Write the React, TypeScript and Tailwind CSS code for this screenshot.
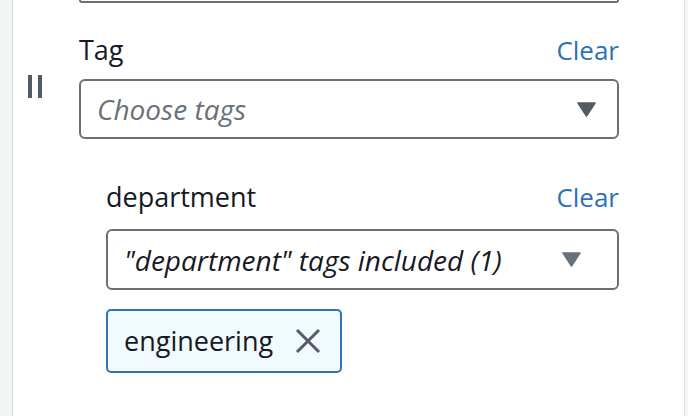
const font = { fontFamily: '"Open Sans", "Noto Sans", sans-serif' };

function Caret({ className }: { className: string }) {
  return (
    <svg width="19" height="15" viewBox="0 0 19 15" className={className}>
      <path d="M1 1h17L9.5 14z" fill="currentColor" stroke="currentColor" strokeWidth="1.5" strokeLinejoin="round" />
    </svg>
  );
}

function DismissIcon() {
  return (
    <svg width="26" height="26" viewBox="0 0 26 26" className="text-[#545b64]">
      <path d="M2 2l22 22M24 2L2 24" stroke="currentColor" strokeWidth="3" fill="none" />
    </svg>
  );
}

function FieldHeader({ label }: { label: string }) {
  return (
    <div className="flex h-[32px] items-center justify-between text-[27px] leading-[32px]">
      <span className="text-[#16191f]">{label}</span>
      <span className="text-[26px] text-[#2b72b8]">Clear</span>
    </div>
  );
}

export default function App() {
  return (
    <div className="flex h-[416px] w-[688px] overflow-hidden bg-white" style={font}>
      <div className="w-[13px] shrink-0 border-r border-[#d5dbdb] bg-[#f2f3f3]" />
      <div className="flex flex-1 border-r border-[#d5dbdb]">
        <div className="w-[66px] shrink-0 pl-[15px] pt-[75px]">
          <div className="flex h-[23px] gap-[6px]">
            <div className="w-[4px] bg-[#545b64]" />
            <div className="w-[4px] bg-[#545b64]" />
          </div>
        </div>
        <div className="flex w-[540px] flex-col">
          <div className="h-[3px] rounded-b-[4px] border-2 border-t-0 border-[#687078]" />
          <div className="mt-[31px]">
            <FieldHeader label="Tag" />
          </div>
          <div className="mt-[13px] flex h-[60px] items-center justify-between rounded-[6px] border-2 border-[#687078] pl-[16px] pr-[21px]">
            <span className="text-[28px] italic text-[#687078]">Choose tags</span>
            <Caret className="text-[#545b64]" />
          </div>
          <div className="pl-[27px]">
            <div className="mt-[42px]">
              <FieldHeader label="department" />
            </div>
            <div className="mt-[16px] flex h-[61px] items-center justify-between rounded-[6px] border-2 border-[#687078] pl-[16px] pr-[36px]">
              <span className="text-[28px] italic text-[#16191f]">"department" tags included (1)</span>
              <Caret className="text-[#687078]" />
            </div>
            <div className="mt-[19px] flex h-[64px] w-[236px] items-center justify-between rounded-[5px] border-2 border-[#2f74b5] bg-[#f1faff] pl-[16px] pr-[19px]">
              <span className="text-[27px] text-[#16191f]">engineering</span>
              <DismissIcon />
            </div>
          </div>
        </div>
        <div className="flex-1" />
      </div>
      <div className="w-[3px] shrink-0 bg-[#f5f5f5]" />
    </div>
  );
}
